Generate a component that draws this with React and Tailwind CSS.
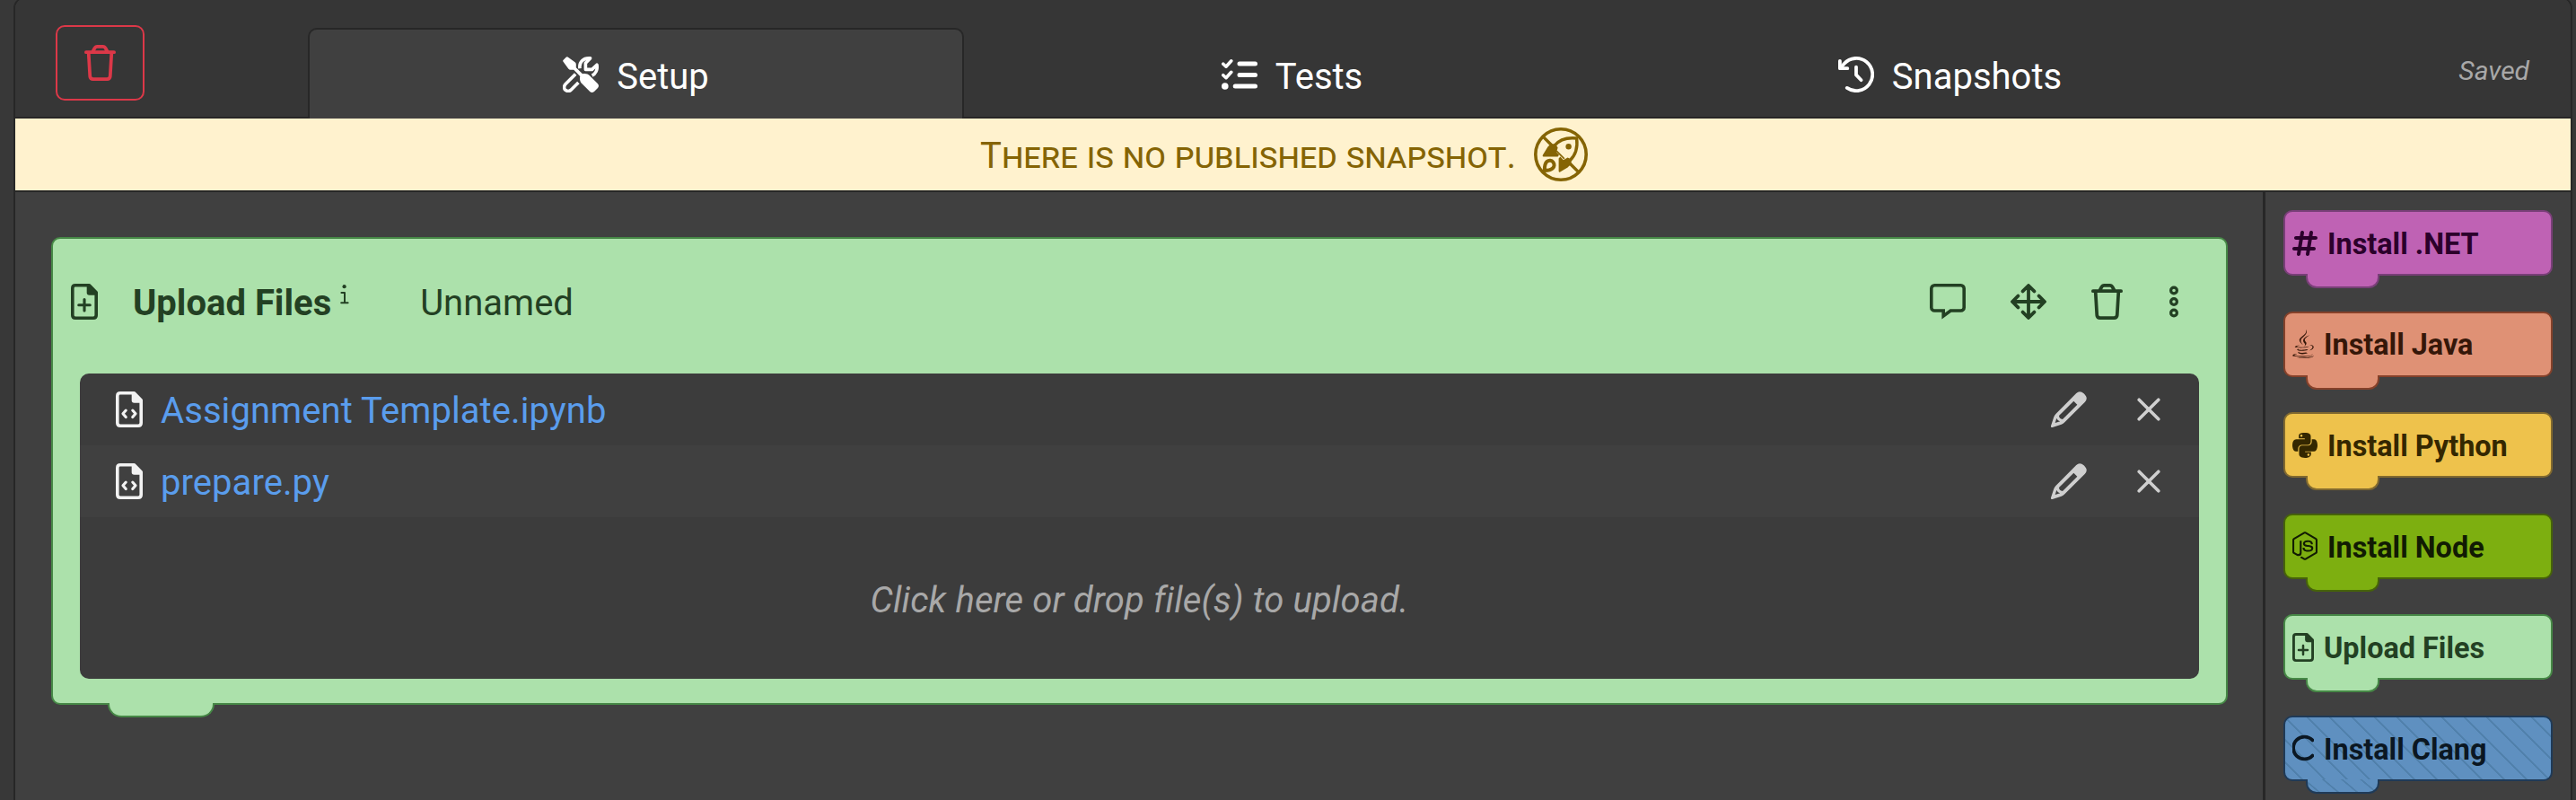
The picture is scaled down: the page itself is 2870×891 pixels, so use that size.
import React from "react";
import { FaHashtag, FaJava, FaPython, FaNodeJs } from "react-icons/fa6";

function Trash({ className }) {
  return (
    <svg viewBox="0 0 448 512" className={className} fill="none" stroke="currentColor" strokeWidth="48" strokeLinecap="round" strokeLinejoin="round">
      <path d="M24 104H424M118 98L146 48Q158 24 184 24H264Q290 24 302 48L330 98" />
      <path d="M60 112L80 448Q84 488 124 488H324Q364 488 368 448L388 112" />
    </svg>
  );
}

function Tools({ className }) {
  return (
    <svg viewBox="0 0 40 40" className={className} fill="none" stroke="currentColor" strokeWidth="3.6" strokeLinecap="butt" strokeLinejoin="round">
      <path fill="currentColor" stroke="none" d="M5.6.4 13.6 6.2Q14.8 7.1 14.8 8.6V12.2L22 19.2C25 18.4 28 19.1 30 21.2L39 30.2Q41 32.5 39 35L35 39Q32.5 41 30.2 39L21.2 30C19.2 28 18.5 25 19.3 22L12.2 14.8H8.6Q7.1 14.8 6.2 13.6L.4 5.6Q-.2 4.6.7 3.7L3.7.7Q4.6-.2 5.6.4Z" />
      <path d="M19 13.2C18 6.5 22.6 1.2 30.6 1.9L25.4 7.2V14.4H32.6L38 9.2C39 14.6 36.6 19.2 32.6 21.2" />
      <path d="M14.2 19.6L3.2 30.6C.7 33.2 1.4 36.2 3.2 37.4C5.2 38.9 7.8 38.6 9.6 36.8L17.4 29" />
    </svg>
  );
}

function Checklist({ className }) {
  return (
    <svg viewBox="0 0 40 40" className={className} fill="none" stroke="currentColor" strokeLinecap="round" strokeLinejoin="round">
      <path strokeWidth="5" d="M20 8H37.5M20 20.5H37.5M15.2 33H37.5" />
      <path strokeWidth="3.6" d="M1.8 8.2L5 11.2L10.8 4.8M1.8 20.7L5 23.7L10.8 17.3" />
      <circle cx="3.8" cy="33" r="3.8" fill="currentColor" stroke="none" />
    </svg>
  );
}

function History({ className }) {
  return (
    <svg viewBox="0 0 40 40" className={className} fill="none" stroke="currentColor" strokeWidth="3.8" strokeLinecap="round" strokeLinejoin="round">
      <path d="M1.9 4.8V13.2H10.3" />
      <path d="M2.6 12.6L6.6 8A18.1 18.1 0 1 1 9.8 34.9" />
      <path d="M20 11.6V20.4L25.6 26.2" />
    </svg>
  );
}

function NoRocket({ className }) {
  return (
    <svg viewBox="0 0 60 60" className={className} fill="none" stroke="currentColor" strokeWidth="3.6" strokeLinecap="round" strokeLinejoin="round">
      <circle cx="30" cy="30" r="28.2" />
      <path strokeWidth="3.4" d="M10.6 10.6L20 20M40 40L49.4 49.4" />
      <path strokeWidth="3.4" d="M22.5 20.5C29 12.5 38 11 47.6 12C48.8 21 47.6 30 39.6 37.2" />
      <circle cx="38.6" cy="21.2" r="3.2" fill="currentColor" stroke="none" />
      <path fill="currentColor" stroke="none" d="M9.8 30.8L15 22.2C16.8 19.4 19 18.2 24 18.2L26.6 22.4L25 27.4L28 30.6L26.6 32.4H10.6Q9.2 32.4 9.8 30.8Z" />
      <path fill="currentColor" stroke="none" d="M29.2 49.6L37.6 44.4C40.4 42.6 42 40.4 41.6 35.6L37.6 33.6L32.8 36.2L29.4 32.6L27.6 34.6V48.8Q28 50.2 29.2 49.6Z" />
      <path strokeWidth="1.6" d="M25.4 26.4L33.4 34.4" />
      <path strokeWidth="4" d="M11.8 48C11.8 43.6 12.2 40 14.4 38.1C16.6 36.2 19.8 36.4 21.4 38.6C23.2 41 22.8 43.8 20.8 45.6C18.6 47.6 15.6 48 11.8 48Z" />
    </svg>
  );
}

function FileIcon({ className, kind }) {
  return (
    <svg viewBox="0 0 384 512" className={className} fill="none" stroke="currentColor" strokeWidth="46" strokeLinecap="round" strokeLinejoin="round">
      <path d="M64 23H262L361 124V448Q361 489 320 489H64Q23 489 23 448V64Q23 23 64 23Z" />
      <path fill="currentColor" stroke="none" d="M226 20H266L370 124V162H264Q226 162 226 124Z" />
      {kind === "plus" ? (
        <path strokeWidth="40" d="M192 224V384M112 304H272" />
      ) : (
        <path strokeWidth="40" d="M144 270L102 318L144 366M240 270L282 318L240 366" />
      )}
    </svg>
  );
}

function Info({ className }) {
  return (
    <svg viewBox="0 0 10 22" className={className} fill="none" stroke="currentColor" strokeWidth="2" strokeLinecap="round" strokeLinejoin="round">
      <circle cx="4.6" cy="2.2" r="2.1" fill="currentColor" stroke="none" />
      <path d="M1.4 9H5V20M1.2 20.2H8.6" />
    </svg>
  );
}

function Message({ className }) {
  return (
    <svg viewBox="0 0 40 40" className={className} fill="none" stroke="currentColor" strokeWidth="3.6">
      <path d="M5.4 1.8H34.6A3.6 3.6 0 0 1 38.2 5.4V26.4A3.6 3.6 0 0 1 34.6 30H23.2L15.2 36V30H5.4A3.6 3.6 0 0 1 1.8 26.4V5.4A3.6 3.6 0 0 1 5.4 1.8Z" />
    </svg>
  );
}

function Move({ className }) {
  return (
    <svg viewBox="0 0 40 40" className={className} fill="none" stroke="currentColor" strokeWidth="3.8" strokeLinecap="round" strokeLinejoin="round">
      <path d="M2.4 20H37.6M20 2.4V37.6M13.6 8.4L20 2L26.4 8.4M13.6 31.6L20 38L26.4 31.6M8.4 13.6L2 20L8.4 26.4M31.6 13.6L38 20L31.6 26.4" />
    </svg>
  );
}

function Dots({ className }) {
  return (
    <svg viewBox="0 0 10 40" className={className} fill="none" stroke="currentColor" strokeWidth="3.2">
      <circle cx="5" cy="7.5" r="3.4" />
      <circle cx="5" cy="20" r="3.4" />
      <circle cx="5" cy="32.5" r="3.4" />
    </svg>
  );
}

function Pencil({ className }) {
  return (
    <svg viewBox="0 0 120 120" className={className} fill="currentColor" fillRule="evenodd">
      <path d="M0 115L10 85Q12 79 17 74L84 7Q96-5 110 7L114 11Q125 24 113 36L46 103Q41 108 35 110L5 120Q-1 121 0 115ZM76 32L27 81C28 89 31 92 39 93L88 44ZM19 89L14 105L31 100C25 98 21 95 19 89Z" />
    </svg>
  );
}

function Close({ className }) {
  return (
    <svg viewBox="0 0 26 26" className={className} fill="none" stroke="currentColor" strokeWidth="3.6" strokeLinecap="round">
      <path d="M2.2 2.2L23.8 23.8M23.8 2.2L2.2 23.8" />
    </svg>
  );
}

function LetterC({ className }) {
  return (
    <svg viewBox="0 0 24 32" className={className} fill="none" stroke="currentColor" strokeWidth="3.8" strokeLinecap="round">
      <path d="M22.4 7.4A12.4 12.4 0 1 0 22.4 24.6" />
    </svg>
  );
}

function FileRow({ name, className }) {
  return (
    <div className={"flex h-20 items-center pl-10 pr-[43px] " + className}>
      <FileIcon className="h-10 w-[30px] text-[#f2f2f2]" />
      <span className="ml-5 pt-[3px] tracking-[0.07px] text-[#5a9ded]">{name}</span>
      <Pencil className="ml-auto h-10 w-10 text-[#cfcfcf]" />
      <Close className="ml-[56px] h-[26px] w-[26px] text-[#cfcfcf]" />
    </div>
  );
}

const blocks = [
  { label: "Install .NET", Icon: FaHashtag, size: "w-7", box: "bg-[#bf62b4] border-[#793f78] text-[#2b002b]" },
  { label: "Install Java", Icon: FaJava, size: "w-6", box: "bg-[#df9175] border-[#85412a] text-[#351709]" },
  { label: "Install Python", Icon: FaPython, size: "w-7", box: "bg-[#eec24c] border-[#81692f] text-[#342700]" },
  { label: "Install Node", Icon: FaNodeJs, size: "w-7", box: "bg-[#7daf10] border-[#466309] text-[#111b03]" },
  { label: "Upload Files", Icon: (p) => <FileIcon kind="plus" {...p} />, size: "w-6", box: "bg-[#ace1ab] border-[#468846] text-[#234023]" },
  {
    label: "Install Clang",
    Icon: LetterC,
    size: "w-6",
    box: "bg-[#5f90c0] border-[#1f3a57] text-[#0b1722]",
    stripes: "bg-[repeating-linear-gradient(45deg,transparent_0px,transparent_12.2px,#5080ab_12.7px,#5080ab_14px,transparent_14.5px,transparent_17.68px)]",
    tabStripes: "bg-[repeating-linear-gradient(40deg,transparent_0px,transparent_7px,#5080ab_7.5px,#5080ab_8.8px,transparent_9.3px,transparent_13.56px)]",
  },
];

function Block({ label, Icon, size, box, stripes = "", tabStripes = "" }) {
  return (
    <div className={"relative flex h-[73px] w-[300px] shrink-0 items-center rounded-[10px] border-2 pl-2 " + box + " " + stripes}>
      <Icon className={"h-8 shrink-0 " + size} />
      <span className="ml-[11px] pt-[3px] text-[32.4px] leading-none font-bold">{label}</span>
      <div className={"absolute left-[23px] top-[69px] h-4 w-[82px] rounded-b-[12px] border-2 border-t-0 " + box + " " + tabStripes} />
    </div>
  );
}

export default function App() {
  return (
    <div className="flex h-[891px] w-[2870px] overflow-hidden bg-[#383838] pl-[15px] font-['Roboto',sans-serif] text-[40px] leading-none">
      <div className="-mt-[3px] flex h-[900px] w-[2851px] flex-col rounded-t-[12px] border-2 border-[#272727] bg-[#404040]">
        <header className="flex h-[133px] shrink-0 rounded-t-[10px] bg-[#363636] pt-px">
          <div className="flex w-[326px] shrink-0 border-b-2 border-[#272727] pl-[45px] pt-[28px]">
            <button className="flex h-[84px] w-[99px] items-center justify-center rounded-[10px] border-2 border-[#dc3848] text-[#dc3848]">
              <Trash className="h-10 w-[35px]" />
            </button>
          </div>
          <div className="mt-[31px] flex w-[731px] shrink-0 justify-center rounded-t-[10px] border-2 border-b-0 border-[#272727] bg-[#404040] pt-[30px] text-white">
            <Tools className="h-10 w-10" />
            <span className="ml-5 pt-[3px]">Setup</span>
          </div>
          <div className="flex w-[731px] shrink-0 justify-center border-b-2 border-[#272727] pt-[63px] text-white">
            <Checklist className="h-10 w-10" />
            <span className="ml-5 pt-[3px]">Tests</span>
          </div>
          <div className="flex w-[735px] shrink-0 justify-center border-b-2 border-[#272727] pt-[63px] text-white">
            <History className="h-10 w-10" />
            <span className="ml-5 pt-[3px]">Snapshots</span>
          </div>
          <div className="flex flex-1 justify-end border-b-2 border-[#272727] pr-[46px] pt-[64px] text-[30px] italic text-[#a8a8a8]">
            Saved
          </div>
        </header>
        <div className="flex h-[82px] shrink-0 items-center justify-center border-b-2 border-[#272727] bg-[#fff2ce] pr-5 text-[#856404]">
          <span className="pt-[3px] [font-variant-caps:small-caps]">There is no published snapshot.</span>
          <NoRocket className="ml-5 h-[60px] w-[60px]" />
        </div>
        <div className="flex flex-1">
          <main className="flex-1 pl-10 pr-[39px] pt-[50px]">
            <section className="relative h-[521px] w-full rounded-[10px] border-2 border-[#468846] bg-[#ace1ab] px-[30px] text-[#234023]">
              <div className="-mx-[10px] flex h-[150px] items-center pb-[10px]">
                <FileIcon kind="plus" className="h-10 w-[30px]" />
                <span className="ml-[39px] pt-[3px] font-bold">Upload Files</span>
                <Info className="mb-[17px] ml-[10px] h-[22px] w-[10px]" />
                <span className="ml-[79px] pt-[3px]">Unnamed</span>
                <Message className="ml-auto h-10 w-10" />
                <Move className="ml-[50px] h-10 w-10" />
                <Trash className="ml-[50px] h-10 w-[35px]" />
                <Dots className="ml-[52px] mr-[33px] h-10 w-[10px]" />
              </div>
              <div className="h-[340px] w-full overflow-hidden rounded-[10px] bg-[#3c3c3c]">
                <FileRow name="Assignment Template.ipynb" className="" />
                <FileRow name="prepare.py" className="bg-[#404040]" />
                <div className="flex h-[180px] items-center justify-center pt-[5px] tracking-[0.15px] italic text-[#a8a8a8]">
                  Click here or drop file(s) to upload.
                </div>
              </div>
              <div className="absolute left-[61px] top-[517px] h-4 w-[119px] rounded-b-[15px] border-2 border-t-0 border-[#468846] bg-[#ace1ab]" />
            </section>
          </main>
          <aside className="flex w-[343px] shrink-0 flex-col gap-[39.6px] border-l-3 border-[#272727] pl-5 pt-5">
            {blocks.map((b) => (
              <Block key={b.label} {...b} />
            ))}
          </aside>
        </div>
      </div>
    </div>
  );
}
